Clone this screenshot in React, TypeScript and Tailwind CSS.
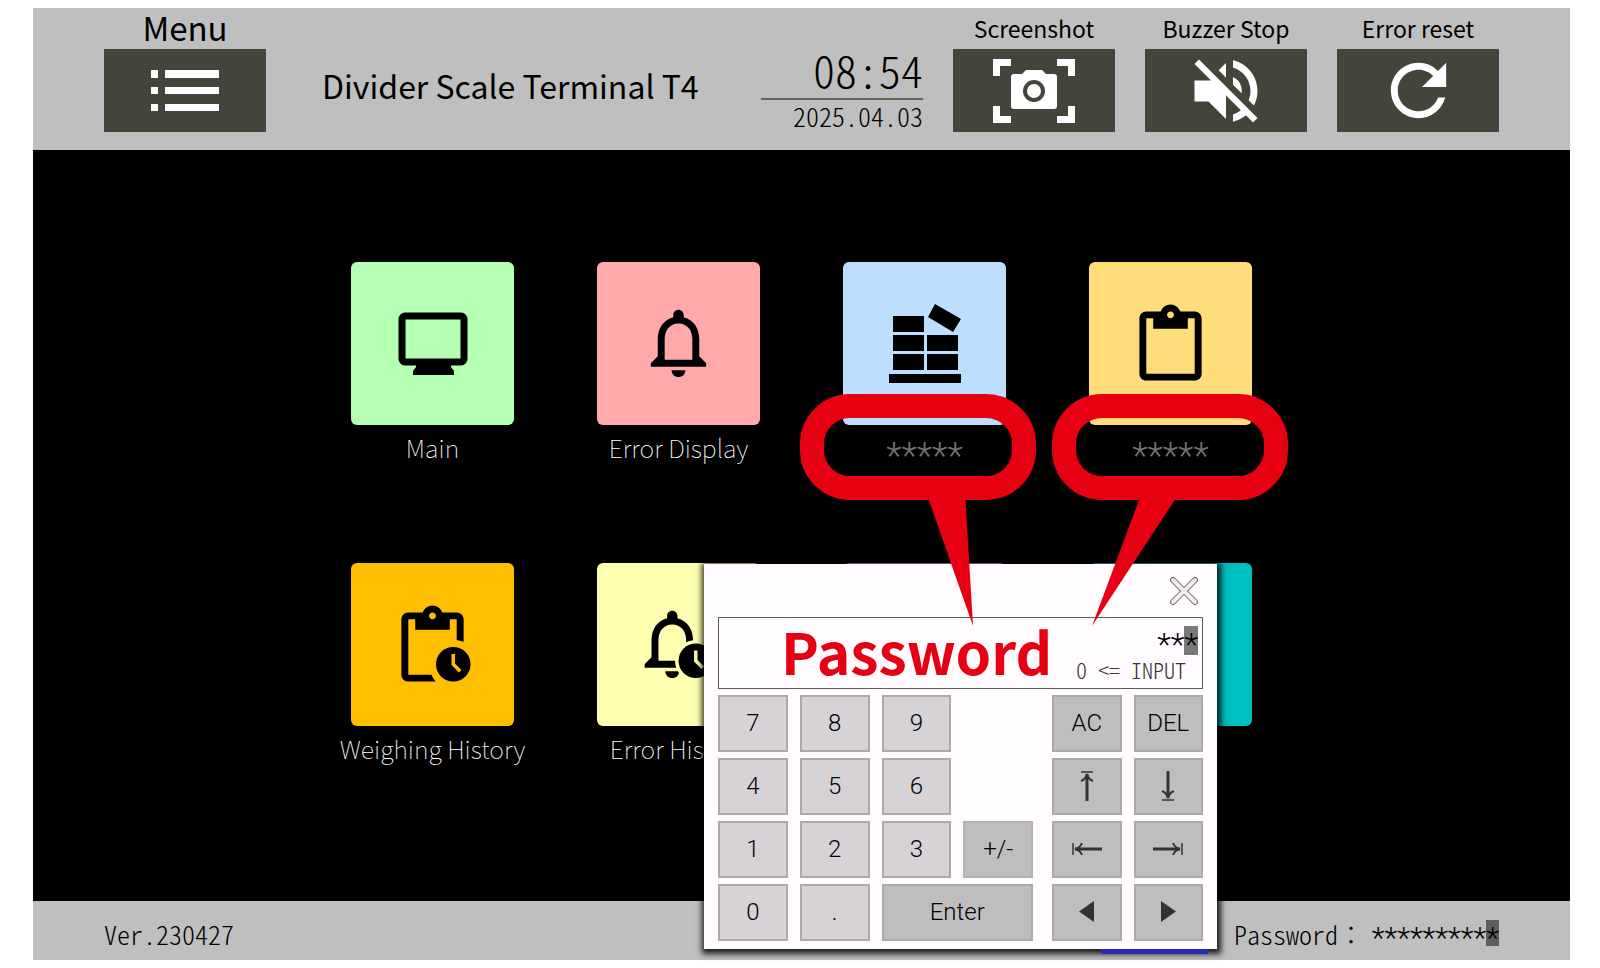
import React from 'react';
import { MdNotificationsNone, MdRefresh, MdVolumeOff } from 'react-icons/md';

const CLOCK_HAND = 'M19.65 20.35L17.5 18.2V15h1v2.79l1.85 1.85-.7.71z';

function MenuIcon() {
  return (
    <svg width="68" height="41" viewBox="0 0 68 41" fill="#fff">
      <path d="M0 0h7v8H0zM14 0h54v8H14zM0 17h7v7H0zM14 17h54v7H14zM0 34h7v7H0zM14 34h54v7H14z" />
    </svg>
  );
}

function CameraIcon() {
  return (
    <svg width="82" height="64" viewBox="0 0 82 64" fill="#fff">
      <path d="M0 0h18v7H7v10H0zM64 0h18v17h-7V7H64zM0 47h7v10h11v7H0zM75 47h7v17H64v-7h11z" />
      <path d="M21 15h8l4-4h16l4 4h8q3 0 3 3v29q0 3-3 3H21q-3 0-3-3V18q0-3 3-3z" />
      <circle cx="41" cy="32" r="9" stroke="#44453a" strokeWidth="4" />
    </svg>
  );
}

function MonitorIcon() {
  return (
    <svg width="162" height="162" viewBox="0 0 162 162">
      <rect x="50" y="54" width="62" height="46" rx="3" fill="none" stroke="#000" strokeWidth="7" />
      <path d="M64 102h35v3l3 4v4H61v-4l3-4z" />
    </svg>
  );
}

function BoxesIcon() {
  return (
    <svg width="162" height="162" viewBox="0 0 162 162">
      <path d="M49 54h31v16H49zM49 73h31v16H49zM49 92h31v16H49zM83 73h31v16H83zM83 92h31v16H83zM45 112h72v9H45z" />
      <path d="M91 42l26 15-8 13-25-15z" />
    </svg>
  );
}

function ClipboardIcon() {
  return (
    <svg width="83" height="83" viewBox="0 0 24 24">
      <path d="M19 3h-4.18C14.4 1.84 13.3 1 12 1s-2.4.84-2.82 2H5c-1.1 0-2 .9-2 2v16c0 1.1.9 2 2 2h14c1.1 0 2-.9 2-2V5c0-1.1-.9-2-2-2zm-7 0c.55 0 1 .45 1 1s-.45 1-1 1-1-.45-1-1 .45-1 1-1zm7 18H5V5h2v3h10V5h2v16z" />
    </svg>
  );
}

function ClipboardClockIcon() {
  return (
    <svg width="83" height="83" viewBox="0 0 24 24">
      <path d="M19 3h-4.18C14.4 1.84 13.3 1 12 1s-2.4.84-2.82 2H5c-1.1 0-2 .9-2 2v16c0 1.1.9 2 2 2h7.9a7 7 0 0 1-1.2-2H5V5h2v3h10V5h2v6l2 .5V5c0-1.1-.9-2-2-2zm-7 0c.55 0 1 .45 1 1s-.45 1-1 1-1-.45-1-1 .45-1 1-1z" />
      <circle cx="18" cy="18" r="5" />
      <path d={CLOCK_HAND} fill="#ffbf00" />
    </svg>
  );
}

function BellClockIcon() {
  return (
    <svg width="83" height="83" viewBox="0 0 24 24">
      <g transform="translate(-1.8 0)">
        <path d="M12 22c1.1 0 2-.9 2-2h-4c0 1.1.89 2 2 2zm6-6v-5c0-3.07-1.63-5.64-4.5-6.32V4c0-.83-.67-1.5-1.5-1.5s-1.5.67-1.5 1.5v.68C7.64 5.36 6 7.92 6 11v5l-2 2v1h16v-1l-2-2zm-2 1H8v-6c0-2.48 1.51-4.5 4-4.5s4 2.02 4 4.5v6z" />
      </g>
      <circle cx="17" cy="17" r="6" fill="#ffffb0" />
      <circle cx="17" cy="17" r="5" />
      <g transform="translate(-1 -1)">
        <path d={CLOCK_HAND} fill="#ffffb0" />
      </g>
    </svg>
  );
}

// Points up; the other directions are rotations of it
function ArrowToBar({ className = '' }: { className?: string }) {
  return (
    <svg className={className} width="30" height="30" viewBox="0 0 30 30" fill="none" stroke="#333">
      <path d="M9 1h12" strokeWidth="1.5" />
      <path d="M15 3v27" strokeWidth="3" />
      <path d="M9 10q5-2 6-7 1 5 6 7" strokeWidth="2" />
    </svg>
  );
}

function Triangle({ className = '' }: { className?: string }) {
  return (
    <svg className={className} width="15" height="21" viewBox="0 0 15 21" fill="#333">
      <path d="M15 0v21L0 10.5z" />
    </svg>
  );
}

function HeaderButton({ label, children }: { label: string; children: React.ReactNode }) {
  return (
    <div className="flex w-[162px] shrink-0 flex-col items-center">
      <span className="text-[23px] leading-[42px] whitespace-nowrap">{label}</span>
      <button aria-label={label} className="flex h-[83px] w-full items-center justify-center bg-[#44453a] text-white">
        {children}
      </button>
    </div>
  );
}

const tiles = [
  { label: 'Main', color: 'bg-[#b4ffb4]', icon: <MonitorIcon /> },
  { label: 'Error Display', color: 'bg-[#ffa9aa]', icon: <MdNotificationsNone size={83} /> },
  { label: '*****', color: 'bg-[#bcdfff]', icon: <BoxesIcon />, locked: true },
  { label: '*****', color: 'bg-[#ffdd7a]', icon: <ClipboardIcon />, locked: true },
  { label: 'Weighing History', color: 'bg-[#ffbf00]', icon: <ClipboardClockIcon /> },
  { label: 'Error History', color: 'bg-[#ffffb0]', icon: <BellClockIcon /> },
  { label: '', color: 'bg-[#d9a0e8]', icon: null },
  { label: '', color: 'bg-[#00bfc0]', icon: null },
];

const numberKeys = ['7', '8', '9', '', '4', '5', '6', '', '1', '2', '3', '+/-', '0', '.', 'Enter'];

const editKeys = [
  { name: 'AC', face: 'AC' },
  { name: 'DEL', face: 'DEL' },
  { name: 'Top', face: <ArrowToBar /> },
  { name: 'Bottom', face: <ArrowToBar className="rotate-180" /> },
  { name: 'Home', face: <ArrowToBar className="-rotate-90" /> },
  { name: 'End', face: <ArrowToBar className="rotate-90" /> },
  { name: 'Left', face: <Triangle /> },
  { name: 'Right', face: <Triangle className="rotate-180" /> },
];

function Keypad() {
  return (
    <div
      role="dialog"
      aria-label="Numeric keypad"
      className="absolute top-[302px] left-[353px] z-10 w-[513px] bg-[#fffbff] px-3.5 pb-2 shadow-[1px_2px_6px_3px_rgba(0,0,0,0.85)]"
    >
      <div className="flex h-[53px] items-center justify-end pr-1">
        <button aria-label="Close">
          <svg width="30" height="30" viewBox="0 0 30 30" strokeLinecap="round">
            <path d="M4 4l22 22M26 4L4 26" stroke="#666" strokeWidth="6" />
            <path d="M4 4l22 22M26 4L4 26" stroke="#f0eef0" strokeWidth="4" />
          </svg>
        </button>
      </div>

      <div className="relative h-[72px] border border-[#5c5e55] px-1 pt-2 text-right font-light">
        <span className="absolute top-2 right-1 h-[29px] w-3.5 bg-[#777b77]" />
        <input
          aria-label="Value"
          readOnly
          value="***"
          className="relative block h-9 w-full bg-transparent text-right font-['Roboto',sans-serif] text-[32px] leading-9"
        />
        <p className="pr-3 text-[22px] leading-[14px] whitespace-pre text-[#333] [font-feature-settings:'hwid']">
          {'0 <= INPUT'}
        </p>
      </div>

      <div className="mt-1.5 flex gap-[19px] font-['Roboto','Liberation_Sans',sans-serif] text-2xl font-light text-black">
        <div className="grid w-[315px] grid-cols-4 gap-x-3 gap-y-1.5">
          {numberKeys.map((key, i) =>
            key === '' ? (
              <span key={i} />
            ) : (
              <button
                key={i}
                className={
                  key === 'Enter'
                    ? 'col-span-2 h-[57px] border-2 border-[#aaa] bg-[#bebebe] pb-0.5'
                    : key === '+/-'
                      ? 'h-[57px] border-2 border-[#b2b2b2] bg-[#bebebe] pb-0.5'
                      : 'h-[57px] border-2 border-[#aaa] bg-[#d6d2d6] pb-0.5'
                }
              >
                {key}
              </button>
            )
          )}
        </div>
        <div className="grid w-[151px] grid-cols-2 gap-x-3 gap-y-1.5">
          {editKeys.map((key) => (
            <button
              key={key.name}
              aria-label={key.name}
              className="flex h-[57px] items-center justify-center border-2 border-[#aaa] bg-[#bebebe] pb-0.5"
            >
              {key.face}
            </button>
          ))}
        </div>
      </div>
    </div>
  );
}

function Callouts() {
  return (
    <div className="pointer-events-none absolute top-0 left-0 z-20">
      <svg width="940" height="366" viewBox="0 0 940 366" fill="#e60012">
        <g fill="none" stroke="#e60012" strokeWidth="24">
          <rect x="461" y="144" width="212" height="82" rx="38" />
          <rect x="713" y="144" width="212" height="82" rx="38" />
        </g>
        <path d="M575 230h39l8 134zM791 230h38l-88 134z" />
      </svg>
      <span className="absolute top-[346px] left-[430px] text-[57px] leading-[84px] font-bold text-[#e60012]">
        Password
      </span>
    </div>
  );
}

export default function App() {
  return (
    <div className="flex min-h-screen flex-col bg-white py-2 pr-[30px] pl-[33px] font-['Noto_Sans_CJK_JP','Noto_Sans',sans-serif] text-black">
      {/* Header */}
      <header className="flex h-[142px] items-end gap-[30px] bg-[#bfbfbf] px-[71px] pb-[18px]">
        <div className="flex w-[162px] shrink-0 flex-col items-center">
          <span className="text-[33px] leading-[44px]">Menu</span>
          <button aria-label="Menu" className="flex h-[83px] w-full items-center justify-center bg-[#44453a]">
            <MenuIcon />
          </button>
        </div>
        <h1 className="flex-1 pb-[22px] pl-[26px] text-[32px] leading-[50px] whitespace-nowrap">
          Divider Scale Terminal T4
        </h1>
        <div className="w-[162px] shrink-0 text-right font-light [font-feature-settings:'hwid']">
          <p className="border-b-2 border-[#66685e] pb-1 text-[44px] leading-[50px]">08:54</p>
          <p className="text-[26px] leading-[32px]">2025.04.03</p>
        </div>
        <HeaderButton label="Screenshot">
          <CameraIcon />
        </HeaderButton>
        <HeaderButton label="Buzzer Stop">
          <MdVolumeOff size={84} />
        </HeaderButton>
        <HeaderButton label="Error reset">
          <MdRefresh size={83} />
        </HeaderButton>
      </header>

      {/* Menu tiles with the keypad on top */}
      <main className="flex flex-1 justify-center bg-black pt-[112px]">
        <div className="relative w-[901px]">
          <div className="grid grid-cols-4 gap-x-[83px] gap-y-[88px]">
            {tiles.map((tile, i) => (
              <div key={i} className="flex flex-col items-center">
                <button
                  aria-label={tile.label}
                  className={`flex h-[163px] w-full items-center justify-center rounded-md pb-0.5 text-black ${tile.color}`}
                >
                  {tile.icon}
                </button>
                <span
                  className={
                    tile.locked
                      ? "h-[50px] font-['Roboto',sans-serif] text-4xl leading-[62px] font-light text-[#787272]"
                      : 'h-[50px] text-[25px] leading-[44px] font-thin whitespace-nowrap text-white'
                  }
                >
                  {tile.label}
                </span>
              </div>
            ))}
          </div>
          <Keypad />
          <Callouts />
        </div>
      </main>

      {/* Footer */}
      <footer className="flex h-[59px] items-center justify-between bg-[#bfbfbf] px-[71px] pt-1.5 text-[26px] leading-[34px] font-light">
        <span className="[font-feature-settings:'hwid']">Ver.230427</span>
        <div className="flex h-full items-center gap-[26px]">
          <span className="relative z-20 mb-1.5 h-[5px] w-[107px] self-end bg-[#2a2ab8]" />
          <div className="flex items-center">
            <label htmlFor="password">
              <span className="[font-feature-settings:'hwid']">Password</span>
              <span className="[font-feature-settings:'fwid']">：</span>
            </label>
            <div className="relative">
              <span className="absolute top-2 right-0 h-[26px] w-[13px] bg-[#5c5f5c]" />
              <input
                id="password"
                readOnly
                value="**********"
                className="relative block w-[135px] bg-transparent pt-2 text-right font-['Roboto',sans-serif] text-3xl leading-[30px]"
              />
            </div>
          </div>
        </div>
      </footer>
    </div>
  );
}
